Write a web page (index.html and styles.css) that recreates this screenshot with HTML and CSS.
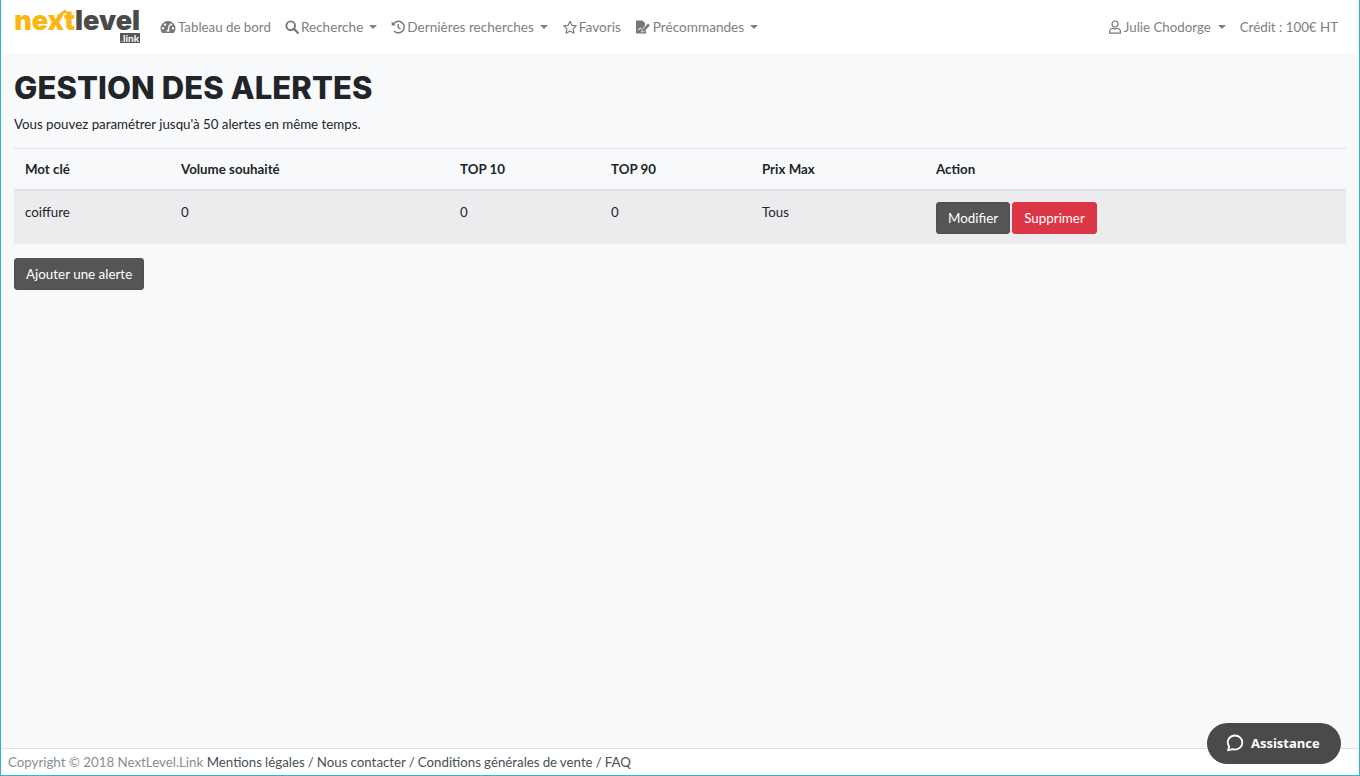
FILE: index.html
```html
<!DOCTYPE html>
<html lang="fr">
<head>
    <meta charset="UTF-8">
    <title>Gestion des alertes</title>
    <link rel="stylesheet" href="styles.css">
</head>
<body>
    <nav class="navbar">
        <a class="logo" href="#">
            <span class="logo-main"><span class="logo-next">next</span><span class="logo-level">level</span></span>
            <span class="logo-link"><span class="logo-dot">.</span>link</span>
        </a>
        <ul class="nav-list">
            <li class="nav-item nav-first">
                <svg class="icon" viewBox="0 0 16 14"><path fill="#777" fill-rule="evenodd" d="M8 1a7.500 7.500 0 0 0-7.500 7.500c0 1.700.6 3.200 1.500 4.300.2.200.4.200.6.200h10.800c.2 0 .4 0 .6-.2.900-1.100 1.500-2.600 1.500-4.300A7.500 7.500 0 0 0 8 1zM3 9.500a1.200 1.200 0 1 1 0-2.400 1.200 1.200 0 0 1 0 2.400zm2-3.700a1.200 1.200 0 1 1 0-2.400 1.200 1.200 0 0 1 0 2.400zm4.600 5.700H6.400c0-.9.700-1.600 1.300-1.700l1.100-5 1.200.3-1.100 5c.4.300.7.800.7 1.400zM11 5.800a1.200 1.200 0 1 1 0-2.400 1.200 1.200 0 0 1 0 2.400zm2 3.700a1.200 1.200 0 1 1 0-2.400 1.200 1.200 0 0 1 0 2.400z"/></svg>
                Tableau de bord
            </li>
            <li class="nav-item caret">
                <svg class="icon icon-sm" viewBox="0 0 14 14"><circle cx="5.700" cy="5.700" r="4.300" fill="none" stroke="#777" stroke-width="1.900"/><path d="M8.800 8.800l4 4" stroke="#777" stroke-width="2.300" stroke-linecap="round"/></svg>
                Recherche
            </li>
            <li class="nav-item caret">
                <svg class="icon icon-sm" viewBox="0 0 14 14"><path d="M2.300 4.200A5.800 5.800 0 1 1 3 11" fill="none" stroke="#777" stroke-width="1.500"/><path d="M.6 1.600l.2 4h4z" fill="#777"/><path d="M7.200 4v3.400l2.300 1.500" fill="none" stroke="#777" stroke-width="1.400"/></svg>
                Dernières recherches
            </li>
            <li class="nav-item">
                <svg class="icon icon-star" viewBox="0 0 16 15"><path d="M8 1.400l2 4.300 4.700.6-3.400 3.200.9 4.600L8 11.800l-4.200 2.300.9-4.600L1.300 6.300 6 5.700z" fill="none" stroke="#777" stroke-width="1.200" stroke-linejoin="round"/></svg>
                Favoris
            </li>
            <li class="nav-item caret">
                <svg class="icon" viewBox="0 0 16 14"><path d="M1 .5h6.500L10 3v2.500L6.500 10l-.3 2.500L9 12l2-2v3.500H1z" fill="#777"/><path d="M3 10.500l2-2.500 1.500 1" fill="none" stroke="#fff" stroke-width="1"/><path d="M7.500 9.500l5.500-6 2 1.800-5.700 6-2.200.4z" fill="#777"/></svg>
                Précommandes
            </li>
        </ul>
        <ul class="nav-list nav-right">
            <li class="nav-item caret caret-wide">
                <svg class="icon icon-sm" viewBox="0 0 14 14"><circle cx="7" cy="4" r="3" fill="none" stroke="#777" stroke-width="1.200"/><path d="M1.600 13.200v-1.500c0-2 1.400-3.200 3-3.200.8 0 1.400.4 2.400.4s1.600-.4 2.400-.4c1.600 0 3 1.200 3 3.200v1.500z" fill="none" stroke="#777" stroke-width="1.200" stroke-linejoin="round"/></svg>
                Julie Chodorge
            </li>
            <li class="nav-item">Crédit : 100€ HT</li>
        </ul>
    </nav>

    <main class="content">
        <h1>Gestion des alertes</h1>
        <p class="intro">Vous pouvez paramétrer jusqu'à 50 alertes en même temps.</p>
        <table class="alerts">
            <colgroup>
                <col class="col-key">
                <col class="col-volume">
                <col class="col-top">
                <col class="col-top">
                <col class="col-price">
                <col>
            </colgroup>
            <thead>
                <tr>
                    <th>Mot clé</th>
                    <th>Volume souhaité</th>
                    <th>TOP 10</th>
                    <th>TOP 90</th>
                    <th>Prix Max</th>
                    <th>Action</th>
                </tr>
            </thead>
            <tbody>
                <tr>
                    <td>coiffure</td>
                    <td>0</td>
                    <td>0</td>
                    <td>0</td>
                    <td>Tous</td>
                    <td>
                        <button class="btn btn-dark">Modifier</button>
                        <button class="btn btn-danger">Supprimer</button>
                    </td>
                </tr>
            </tbody>
        </table>
        <button class="btn btn-dark">Ajouter une alerte</button>
    </main>

    <footer class="footer">
        Copyright © 2018 NextLevel.Link
        <span class="footer-links">Mentions légales / Nous contacter / Conditions générales de vente / FAQ</span>
    </footer>

    <div class="assistance">
        <svg class="assistance-icon" viewBox="0 0 18 18"><path d="M9 1.500c-4.200 0-7.300 3-7.300 6.800 0 1.600.6 3 1.500 4.100L2 16.500l4.300-1.300c.8.300 1.700.4 2.700.4 4.200 0 7.300-3.300 7.300-7.100S13.200 1.500 9 1.500z" fill="none" stroke="#fff" stroke-width="1.800" stroke-linejoin="round"/></svg>
        Assistance
    </div>
</body>
</html>
```

FILE: styles.css
```css
* {
    box-sizing: border-box;
}

html, body {
    height: 100%;
}

body {
    margin: 0;
    height: 776px;
    display: flex;
    flex-direction: column;
    overflow: hidden;
    font-family: Lato, "Liberation Sans", sans-serif;
    font-size: 13.3px;
    line-height: 20px;
    color: #212529;
    background: #f8f9fa;
    border: 1px solid #2bb4d6;
    border-top: none;
}

.navbar {
    display: flex;
    align-items: center;
    height: 53px;
    padding: 0 14px 0 13px;
    background: #fff;
}

.logo {
    display: flex;
    flex-direction: column;
    align-items: flex-end;
    width: 126px;
    margin-right: 13px;
    text-decoration: none;
}

.logo-main {
    font-family: Inter, Lato, sans-serif;
    font-size: 27px;
    font-weight: 900;
    line-height: 22px;
    white-space: nowrap;
}

.logo-next {
    position: relative;
    color: #fcb614;
}

/* the little stroke that leaves the x */
.logo-next::after {
    content: "";
    position: absolute;
    left: 43px;
    top: 8px;
    width: 10px;
    height: 3px;
    background: #fcb614;
    transform: rotate(-35deg);
}

.logo-level {
    color: #4a4a4a;
}

.logo-link {
    margin-top: 1px;
    padding: 0 1px;
    font-size: 10px;
    font-weight: 700;
    line-height: 10px;
    color: #fff;
    background: #555;
}

.logo-dot {
    color: #fcb614;
}

.nav-list {
    display: flex;
    margin: 0;
    padding: 0;
    list-style: none;
    font-size: 13.6px;
}

.nav-right {
    margin-left: auto;
    font-size: 13.3px;
}

.nav-item {
    display: flex;
    align-items: center;
    padding: 0 7px;
    color: #808080;
    white-space: nowrap;
}

.nav-first {
    font-size: 13.3px;
}

.caret::after {
    content: "";
    margin-left: 6px;
    border-top: 4px solid #808080;
    border-left: 4px solid transparent;
    border-right: 4px solid transparent;
}

.caret-wide::after {
    margin-left: 7px;
}

.icon {
    width: 16px;
    height: 14px;
    margin-right: 2px;
}

.icon-sm {
    width: 14px;
}

.icon-star {
    margin-right: 1px;
}

.content {
    flex: 1;
    padding: 16px 13px 0;
}

h1 {
    margin: 0 0 8px;
    font-family: Inter, Lato, sans-serif;
    font-size: 31px;
    font-weight: 800;
    line-height: 37px;
    letter-spacing: 0.1px;
    text-transform: uppercase;
}

.intro {
    margin: 0 0 14px;
}

.alerts {
    width: 100%;
    margin-bottom: 14px;
    border-collapse: collapse;
    table-layout: fixed;
}

.col-key {
    width: 156px;
}

.col-volume {
    width: 279px;
}

.col-top {
    width: 151px;
}

.col-price {
    width: 174px;
}

th, td {
    padding: 10px 11px 9px;
    text-align: left;
    vertical-align: top;
    border-top: 1px solid #dee2e6;
}

th {
    height: 41px;
    font-weight: 700;
    border-bottom: 2px solid #dee2e6;
}

tbody td {
    padding-top: 11px;
    border-top: none;
    height: 53px;
    background: #ececee;
}

tbody td:last-child {
    padding-top: 11px;
    padding-bottom: 10px;
    font-size: 0;
}

.btn {
    height: 32px;
    padding: 0 11px;
    font-family: inherit;
    font-size: 13.4px;
    color: #fff;
    border: 1px solid transparent;
    border-radius: 3px;
}

td .btn + .btn {
    margin-left: 2px;
}

.btn-dark {
    background: #555;
    border-color: #4f4f4f;
}

.btn-danger {
    background: #dc3545;
    border-color: #dc3545;
}

.footer {
    height: 27px;
    padding: 3px 7px 0;
    color: #868e96;
    background: #fff;
    border-top: 1px solid #dee2e6;
}

.footer-links {
    color: #495057;
    word-spacing: -0.35px;
}

.assistance {
    position: absolute;
    left: 1207px;
    top: 723px;
    display: flex;
    align-items: center;
    gap: 7px;
    width: 134px;
    height: 41px;
    padding: 0 0 1px 19px;
    font-family: "Open Sans", sans-serif;
    font-size: 13px;
    font-weight: 700;
    color: #fff;
    background: #4a4a4a;
    border-radius: 21px;
}

.assistance-icon {
    width: 18px;
    height: 18px;
}
```
